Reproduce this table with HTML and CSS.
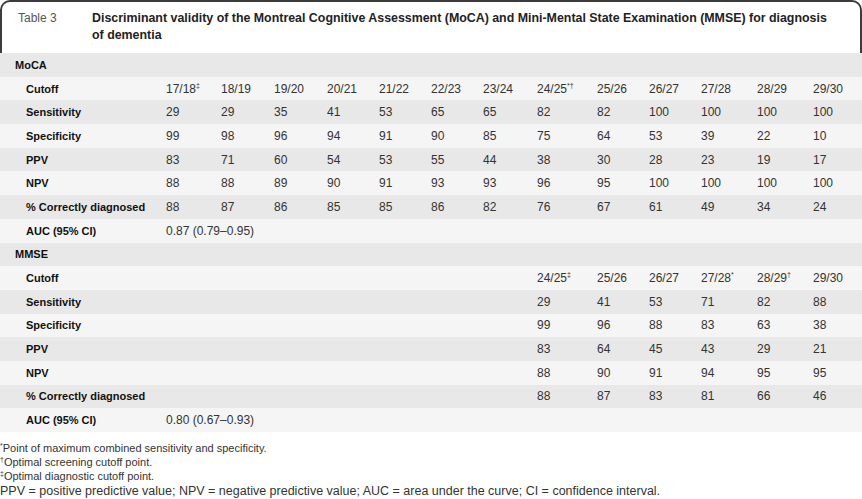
FILE: index.html
```html
<!DOCTYPE html>
<html>
<head>
<meta charset="utf-8">
<link rel="stylesheet" href="styles.css">
</head>
<body>
<div class="caption">
  <div class="label">Table 3</div>
  <div class="title">Discriminant validity of the Montreal Cognitive Assessment (MoCA) and Mini-Mental State Examination (MMSE) for diagnosis<br>of dementia</div>
</div>
<table class="data">
  <colgroup>
    <col style="width:166px"><col style="width:55px"><col style="width:53px"><col style="width:53px"><col style="width:52px"><col style="width:52px"><col style="width:52px"><col style="width:54px"><col style="width:60px"><col style="width:52px"><col style="width:52px"><col style="width:56px"><col style="width:56px"><col style="width:49px">
  </colgroup>
  <tbody>
    <tr class="g"><td class="sec" colspan="14">MoCA</td></tr>
    <tr class="l"><td class="lab">Cutoff</td><td>17/18<sup>‡</sup></td><td>18/19</td><td>19/20</td><td>20/21</td><td>21/22</td><td>22/23</td><td>23/24</td><td>24/25<sup>*†</sup></td><td>25/26</td><td>26/27</td><td>27/28</td><td>28/29</td><td>29/30</td></tr>
    <tr class="g"><td class="lab">Sensitivity</td><td>29</td><td>29</td><td>35</td><td>41</td><td>53</td><td>65</td><td>65</td><td>82</td><td>82</td><td>100</td><td>100</td><td>100</td><td>100</td></tr>
    <tr class="l"><td class="lab">Specificity</td><td>99</td><td>98</td><td>96</td><td>94</td><td>91</td><td>90</td><td>85</td><td>75</td><td>64</td><td>53</td><td>39</td><td>22</td><td>10</td></tr>
    <tr class="g"><td class="lab">PPV</td><td>83</td><td>71</td><td>60</td><td>54</td><td>53</td><td>55</td><td>44</td><td>38</td><td>30</td><td>28</td><td>23</td><td>19</td><td>17</td></tr>
    <tr class="l"><td class="lab">NPV</td><td>88</td><td>88</td><td>89</td><td>90</td><td>91</td><td>93</td><td>93</td><td>96</td><td>95</td><td>100</td><td>100</td><td>100</td><td>100</td></tr>
    <tr class="g"><td class="lab">% Correctly diagnosed</td><td>88</td><td>87</td><td>86</td><td>85</td><td>85</td><td>86</td><td>82</td><td>76</td><td>67</td><td>61</td><td>49</td><td>34</td><td>24</td></tr>
    <tr class="l"><td class="lab">AUC (95% CI)</td><td colspan="13">0.87 (0.79–0.95)</td></tr>
    <tr class="g"><td class="sec" colspan="14">MMSE</td></tr>
    <tr class="l"><td class="lab">Cutoff</td><td colspan="7"></td><td>24/25<sup>‡</sup></td><td>25/26</td><td>26/27</td><td>27/28<sup>*</sup></td><td>28/29<sup>†</sup></td><td>29/30</td></tr>
    <tr class="g"><td class="lab">Sensitivity</td><td colspan="7"></td><td>29</td><td>41</td><td>53</td><td>71</td><td>82</td><td>88</td></tr>
    <tr class="l"><td class="lab">Specificity</td><td colspan="7"></td><td>99</td><td>96</td><td>88</td><td>83</td><td>63</td><td>38</td></tr>
    <tr class="g"><td class="lab">PPV</td><td colspan="7"></td><td>83</td><td>64</td><td>45</td><td>43</td><td>29</td><td>21</td></tr>
    <tr class="l"><td class="lab">NPV</td><td colspan="7"></td><td>88</td><td>90</td><td>91</td><td>94</td><td>95</td><td>95</td></tr>
    <tr class="g"><td class="lab">% Correctly diagnosed</td><td colspan="7"></td><td>88</td><td>87</td><td>83</td><td>81</td><td>66</td><td>46</td></tr>
    <tr class="l"><td class="lab">AUC (95% CI)</td><td colspan="13">0.80 (0.67–0.93)</td></tr>
  </tbody>
</table>
<div class="notes">
  <p class="fn"><sup>*</sup>Point of maximum combined sensitivity and specificity.</p>
  <p class="fn"><sup>†</sup>Optimal screening cutoff point.</p>
  <p class="fn"><sup>‡</sup>Optimal diagnostic cutoff point.</p>
  <p class="abbr">PPV = positive predictive value; NPV = negative predictive value; AUC = area under the curve; CI = confidence interval.</p>
</div>
</body>
</html>
```
FILE: styles.css
```css
html, body {
  margin: 0;
  padding: 0;
  background: #fff;
}
body {
  font-family: "Liberation Sans", Arial, sans-serif;
  color: #222;
  width: 862px;
}
.caption {
  box-sizing: border-box;
  height: 53px;
  margin: 0;
  border: 2px solid #3c3c3c;
  border-bottom: none;
  border-radius: 10px 10px 0 0;
  display: flex;
  padding: 8px 0 0 16px;
}
.caption .label {
  width: 74px;
  flex: none;
  font-size: 12px;
  line-height: 17px;
  color: #555;
}
.caption .title {
  flex: 1;
  white-space: nowrap;
  font-size: 12.4px;
  font-weight: bold;
  line-height: 17px;
  color: #222;
}
table.data {
  border-collapse: collapse;
  border-spacing: 0;
  table-layout: fixed;
  width: 862px;
}
table.data tr {
  height: 23.7px;
}
tr.g { background: #e8e8e8; }
tr.l { background: #f5f5f5; }
table.data td {
  padding: 0;
  font-size: 12px;
  color: #333;
  white-space: nowrap;
  vertical-align: middle;
}
table.data td.sec {
  padding-left: 15px;
  font-weight: bold;
  font-size: 11px;
  color: #111;
}
table.data td.lab {
  padding-left: 26px;
  font-weight: bold;
  font-size: 11px;
  color: #111;
}
sup {
  font-size: 7px;
  line-height: 0;
  vertical-align: 5px;
}
.notes {
  padding-top: 9px;
  color: #333;
}
.notes p {
  margin: 0;
}
.notes .fn {
  font-size: 11px;
  line-height: 14px;
}
.notes .fn sup {
  font-size: 7px;
  vertical-align: 4px;
}
.notes .abbr {
  font-size: 12.5px;
  line-height: 16px;
}
```
